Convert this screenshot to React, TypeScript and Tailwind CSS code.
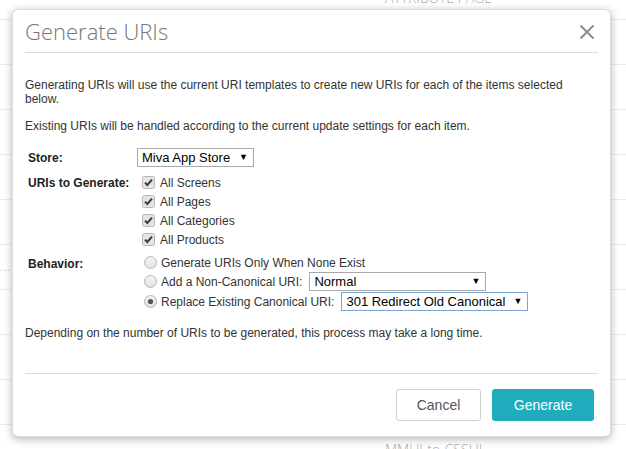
import React from 'react';

const Check = () => (
  <svg width="13" height="13" viewBox="0 0 13 13" className="shrink-0">
    <rect x="0.5" y="0.5" width="12" height="12" rx="2" fill="#e4e4e4" stroke="#b8b8b8" />
    <path d="M3 6.6 L5.3 9 L10 3.6" fill="none" stroke="#3a3a3a" strokeWidth="2" />
  </svg>
);

const Radio = ({ checked }: { checked?: boolean }) => (
  <svg width="13" height="13" viewBox="0 0 13 13" className="shrink-0">
    <defs>
      <linearGradient id="rg" x1="0" y1="0" x2="0" y2="1">
        <stop offset="0" stopColor="#f4f4f4" />
        <stop offset="1" stopColor="#e2e2e2" />
      </linearGradient>
    </defs>
    <circle cx="6.5" cy="6.5" r="6" fill="url(#rg)" stroke="#b5b5b5" />
    {checked && <circle cx="6.5" cy="6.5" r="2.6" fill="#555" />}
  </svg>
);

function Select({ label, width, focused }: { label: string; width: string; focused?: boolean }) {
  return (
    <div
      className={`flex h-[19px] items-center justify-between border bg-white pl-[4px] pr-[5px] text-[13px] leading-none text-black ${width} ${
        focused ? 'border-[#7aa5d8]' : 'border-[#a9a9a9]'
      }`}
    >
      <span>{label}</span>
      <span className="text-[9px]">▼</span>
    </div>
  );
}

const checks = ['All Screens', 'All Pages', 'All Categories', 'All Products'];

export default function App() {
  const rows = Array.from({ length: 9 });

  return (
    <div className="relative h-[449px] w-[626px] overflow-hidden bg-white font-['Liberation_Sans',Arial,sans-serif]">
      {/* page behind the dialog */}
      <div className="flex flex-col">
        <div className="relative h-[20px] border-b border-[#ececec]">
          <span className="absolute left-[385px] top-[-13px] font-['Open_Sans',sans-serif] text-[14px] font-light text-[#aaa]">
            ATTRIBUTE PAGE
          </span>
        </div>
        {rows.map((_, i) => (
          <div key={i} className="relative h-[45px] border-b border-[#ececec]">
            {i === 5 && (
              <span className="absolute left-0 top-[18px] text-[10px] leading-none tracking-[1px] text-[#bbb]">....</span>
            )}
          </div>
        ))}
        <div className="h-[45px] pl-[385px] pt-[14px] font-['Open_Sans',sans-serif] text-[14px] font-light text-[#aaa]">
          MMUI-to-CSSUI
        </div>
      </div>

      {/* dialog */}
      <div className="absolute left-[12px] top-[9px] flex w-[599px] flex-col rounded-[6px] border border-[#00000022] bg-white shadow-[0_2px_8px_rgba(0,0,0,0.3)]">
        <div className="mx-[12px] flex h-[43px] items-start justify-between border-b border-[#dcdcdc] pt-[7px]">
          <h1 className="font-['Open_Sans',sans-serif] text-[22px] font-light leading-[28px] text-[#777]">
            Generate URIs
          </h1>
          <button className="mr-[3px] mt-[7px]">
            <svg width="16" height="16" viewBox="0 0 16 16">
              <path d="M1.5 1.5 L14.5 14.5 M14.5 1.5 L1.5 14.5" stroke="#8c8c8c" strokeWidth="2" />
            </svg>
          </button>
        </div>

        <div className="mx-[12px] pt-[25px] text-[12px] leading-[14px] text-[#333]">
          <p>
            Generating URIs will use the current URI templates to create new URIs for each of the items selected
            <br />
            below.
          </p>
          <p className="mt-[13px]">Existing URIs will be handled according to the current update settings for each item.</p>

          <div className="mt-[15px] grid grid-cols-[109px_1fr] pl-[3px]">
            <div className="flex h-[19px] items-center font-bold text-[#222]">Store:</div>
            <div>
              <Select label="Miva App Store" width="w-[117px]" />
            </div>

            <div className="mt-[6px] flex h-[19px] items-center font-bold text-[#222]">URIs to Generate:</div>
            <div className="mt-[6px] flex flex-col">
              {checks.map((c) => (
                <label key={c} className="flex h-[19px] items-center gap-[5px] pl-[5px]">
                  <Check />
                  <span>{c}</span>
                </label>
              ))}
            </div>

            <div className="mt-[5px] flex h-[19px] items-center font-bold text-[#222]">Behavior:</div>
            <div className="mt-[4px] flex flex-col">
              <label className="flex h-[19px] items-center gap-[4px] pl-[7px]">
                <Radio />
                <span>Generate URIs Only When None Exist</span>
              </label>
              <label className="flex h-[19px] items-center gap-[4px] pl-[7px]">
                <Radio />
                <span className="mr-[3px]">Add a Non-Canonical URI:</span>
                <Select label="Normal" width="w-[177px]" />
              </label>
              <label className="flex h-[21px] items-center gap-[4px] pl-[7px]">
                <Radio checked />
                <span className="mr-[3px]">Replace Existing Canonical URI:</span>
                <Select label="301 Redirect Old Canonical" width="w-[187px]" focused />
              </label>
            </div>
          </div>

          <p className="mt-[14px]">Depending on the number of URIs to be generated, this process may take a long time.</p>
        </div>

        <div className="mx-[12px] mt-[33px] flex justify-end gap-[11px] border-t border-[#dcdcdc] pb-[15px] pt-[15px]">
          <button className="h-[32px] w-[85px] rounded-[3px] border border-[#cfcfcf] bg-white text-[14px] text-[#555]">
            Cancel
          </button>
          <button className="mr-[4px] h-[32px] w-[102px] rounded-[3px] bg-[#1fadbd] text-[14px] text-white">
            Generate
          </button>
        </div>
      </div>
    </div>
  );
}
